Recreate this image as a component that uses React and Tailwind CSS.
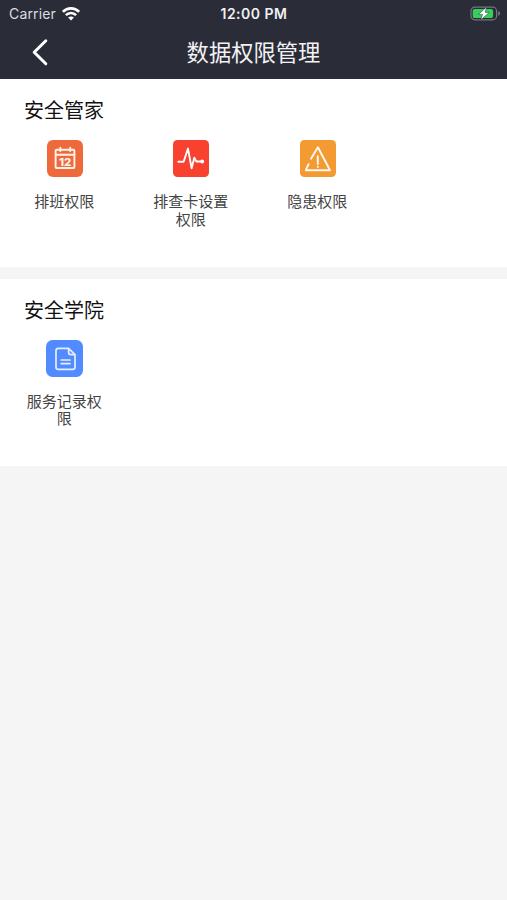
import React from 'react';

const StatusBar = () => (
    <div className="flex items-center justify-between h-[27px] pl-[9px] pr-[6px] text-[14px] leading-none font-['Inter','Liberation_Sans',sans-serif]">
        <div className="flex-1 flex items-center gap-[6px]">
            <span className="text-[#dcdde1] tracking-[0.15px]">Carrier</span>
            <svg className="w-[18px] h-[14px]" viewBox="0 0 18 14" fill="none" stroke="#fff" strokeWidth="2.6">
                <path d="M0.9 4.8C5.4 0.2 12.6 0.2 17.1 4.8" />
                <path d="M3.9 8.1C6.8 5.2 11.2 5.2 14.1 8.1" />
                <path d="M9 13.4L6.1 10.5C7.8 9 10.2 9 11.9 10.5Z" fill="#fff" stroke="none" />
            </svg>
        </div>
        <span className="pt-px pr-[2px] text-[14px] font-semibold text-[#f0f0f2] tracking-[0.5px]">12:00 PM</span>
        <div className="flex-1 flex justify-end">
            <svg className="w-[31px] h-[16px]" viewBox="0 0 31 16">
                <rect x="1" y="1.2" width="25.6" height="12.6" rx="3.8" fill="none" stroke="#747780" strokeWidth="1.2" />
                <path d="M28.2 5.1C30.8 6.1 30.8 8.9 28.2 9.9Z" fill="#747780" />
                <rect x="2.7" y="2.9" width="20.4" height="9.2" rx="2.2" fill="#35cf5b" />
                <path d="M16.4 1L8.6 8.4H12.5L10.8 14L19.2 6.4H15.2Z" fill="#fff" stroke="#2a2c38" strokeWidth="0.5" />
            </svg>
        </div>
    </div>
);

const CalendarIcon = () => (
    <svg className="w-[36px] h-[37px]" viewBox="0 0 36 37">
        <rect width="36" height="37" rx="6" fill="#ee6a3c" />
        <g fill="none" stroke="#fff3ea" strokeWidth="1.9" strokeLinecap="round">
            <rect x="8.6" y="9.8" width="18.8" height="18.2" rx="1" />
            <path d="M9 14.8H27.4M13.3 7.6V11M23.2 7.6V11" />
        </g>
        <text x="18.1" y="25.6" textAnchor="middle" fontSize="10.5" fontWeight="800" fill="#fff3ea" textLength="12.4" lengthAdjust="spacingAndGlyphs" fontFamily="Inter, sans-serif">12</text>
    </svg>
);

const PulseIcon = () => (
    <svg className="w-[36px] h-[37px]" viewBox="0 0 36 37">
        <rect width="36" height="37" rx="4.5" fill="#f9412f" />
        <path d="M5.3 21.7H10.6L15 8.6L18.6 28.2L21.3 17.7L23.4 21.5H29" fill="none" stroke="#fff" strokeWidth="1.9" strokeLinejoin="round" strokeLinecap="round" />
        <circle cx="29.2" cy="21.5" r="1.9" fill="#fff" />
    </svg>
);

const WarningIcon = () => (
    <svg className="w-[36px] h-[37px]" viewBox="0 0 36 37">
        <rect width="36" height="37" rx="4.5" fill="#f49a32" />
        <g fill="none" stroke="#fffaf0" strokeWidth="1.9" strokeLinejoin="round" strokeLinecap="round">
            <path d="M11 18.8L17.9 7.3L30 30.2H5.8L8.6 24.2" />
            <path d="M17.8 16.2V24M17.8 26.8V27" />
        </g>
    </svg>
);

const DocumentIcon = () => (
    <svg className="w-[37px] h-[37px]" viewBox="0 0 37 37">
        <rect width="37" height="37" rx="6.5" fill="#528bff" />
        <g fill="none" stroke="#e3efff" strokeWidth="1.7" strokeLinejoin="round" strokeLinecap="round">
            <path d="M22.6 8.3H12.4Q10 8.3 10 10.7V27Q10 29.4 12.4 29.4H26.6Q29 29.4 29 27V14.7L22.6 8.3V12.3Q22.6 14.7 25 14.7H29" />
            <path d="M15.2 20H24M15.2 23.6H24" />
        </g>
    </svg>
);

const sections = [
    {
        title: '安全管家',
        items: [
            { label: '排班权限', icon: CalendarIcon },
            { label: '排查卡设置权限', icon: PulseIcon },
            { label: '隐患权限', icon: WarningIcon },
        ],
    },
    {
        title: '安全学院',
        items: [{ label: '服务记录权限', icon: DocumentIcon }],
    },
];

const Section = ({ title, items }) => (
    <section className="h-[187.5px] bg-white pt-[16px]">
        <h2 className="pl-[24px] text-[20px] leading-[30px] text-[#111]">{title}</h2>
        <div className="grid grid-cols-4 pt-[15px] pl-px">
            {items.map(({ label, icon: Icon }) => (
                <div key={label} className="flex flex-col items-center">
                    <div className="pl-px">
                        <Icon />
                    </div>
                    <span className="mt-[15px] w-[76px] text-center text-[15px] leading-[17.5px] text-[#444]">{label}</span>
                </div>
            ))}
        </div>
    </section>
);

const App = () => (
    <div className="w-full h-screen overflow-hidden bg-[#f5f5f5] font-['Noto_Sans_CJK_SC',sans-serif]">
        <header className="h-[79px] bg-[#2a2c38]">
            <StatusBar />
            <div className="flex items-center h-[50px] pl-[31px]">
                <button className="w-[18px] h-[28px]" aria-label="返回">
                    <svg className="w-[18px] h-[28px]" viewBox="0 0 18 28" fill="none" stroke="#fff" strokeWidth="3" strokeLinecap="round" strokeLinejoin="round">
                        <path d="M14.8 2.8L3.2 14.3L14.8 25.8" />
                    </svg>
                </button>
                <h1 className="flex-1 pr-[49px] pb-[3px] text-center text-[22.3px] leading-[32px] text-[#f2f2f4]">数据权限管理</h1>
            </div>
        </header>
        <main className="flex flex-col gap-[12px]">
            {sections.map((section) => (
                <Section key={section.title} {...section} />
            ))}
        </main>
    </div>
);

export default App;
